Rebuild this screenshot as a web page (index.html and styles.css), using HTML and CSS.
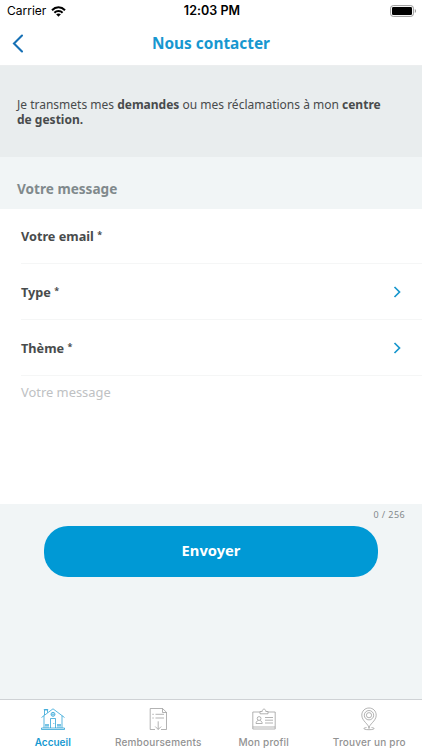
FILE: index.html
```html
<!DOCTYPE html>
<html lang="fr">
<head>
<meta charset="utf-8">
<title>Nous contacter</title>
<link rel="stylesheet" href="styles.css">
</head>
<body>
<div class="status">
  <span class="carrier">Carrier
    <svg width="15" height="11" viewBox="0 0 15 11"><g fill="none" stroke="#000" stroke-width="2"><path d="M1 4.2C4.7.4 10.3.4 14 4.2"/><path d="M3.4 6.7c2.3-2.3 5.9-2.3 8.2 0"/></g><path d="M5.1 8.3c1.4-1.2 3.4-1.2 4.8 0L7.5 10.8z"/></svg>
  </span>
  <span class="time">12:03 PM</span>
  <svg class="battery" width="27" height="12" viewBox="0 0 27 12"><rect x=".6" y=".6" width="22.8" height="10.8" rx="2.6" fill="none" stroke="#999"/><rect x="2" y="2" width="20" height="8" rx="1.3"/><path d="M24.8 4c1.7.6 1.7 3.4 0 4z" fill="#999"/></svg>
</div>
<header class="nav">
  <svg class="back" width="12" height="19" viewBox="0 0 12 19"><path d="M10 1.5 2 9.5l8 8" fill="none" stroke="#1670b5" stroke-width="2.1" stroke-linecap="round"/></svg>
  <h1>Nous contacter</h1>
</header>
<main>
  <p class="intro">Je transmets mes <b>demandes</b> ou mes réclamations à mon <b>centre<br>de gestion.</b></p>
  <h2>Votre message</h2>
  <section class="form">
    <div class="row"><span>Votre email <i>*</i></span></div>
    <div class="row"><span>Type <i>*</i></span><svg width="8" height="12" viewBox="0 0 8 12"><path d="m1.5 1 5 5-5 5" fill="none" stroke="#1797cd" stroke-width="1.7"/></svg></div>
    <div class="row"><span>Thème <i>*</i></span><svg width="8" height="12" viewBox="0 0 8 12"><path d="m1.5 1 5 5-5 5" fill="none" stroke="#1797cd" stroke-width="1.7"/></svg></div>
    <div class="message">Votre message</div>
  </section>
  <div class="count">0 / 256</div>
  <button type="button">Envoyer</button>
</main>
<nav class="tabs">
  <a class="active">
    <svg width="26" height="24" viewBox="0 0 26 24"><path d="M1.5 10.5 13 1.8l11.5 8.7M4 8.7V21m18-12.3V21M4.5 8V3h3v2.7M3.8 2.5h4.4M1.5 22.5h23V21h-23zM10.5 21v-9.5h5V21M13.8 16v1M6 17v4m2-4v4m10-4v4m2-4v4M5 18h4m8 0h4"/><circle cx="13" cy="7.3" r="2"/><path d="M13 5.3v4M11 7.3h4" stroke-width=".5"/></svg>
    <span>Accueil</span>
  </a>
  <a>
    <svg width="26" height="24" viewBox="0 0 26 24"><path d="M10 22.5H5.2V1.5h12.3l4 3.8v17.2H16M17.5 1.5v4h4M7.3 7.3h1.5m1.7 0h8.5M7.3 11h1.5m1.7 0h8.5M13.2 14.3v8m-3-2.8 3 3 3-3"/></svg>
    <span>Remboursements</span>
  </a>
  <a>
    <svg width="26" height="24" viewBox="0 0 26 24"><path d="M9 5H1.8v17h22.4V5H17M1.8 20h22.4M9 6.8h8V4.5h-2.2c0-3.2-3.6-3.2-3.6 0H9zM5 16.5c0-2 1.2-2.7 2.4-3M11.2 16.5c0-2-1.2-2.7-2.4-3M5 16.5h6.2M14 10.5h8M14 13.2h8M14 16h8"/><circle cx="8.1" cy="11.5" r="1.9"/></svg>
    <span>Mon profil</span>
  </a>
  <a>
    <svg width="26" height="24" viewBox="0 0 26 24"><path d="M13 21.5c0-4.5-7.2-7.3-7.2-13.3C5.8 4 9 1 13 1s7.2 3 7.2 7.2c0 6-7.2 8.8-7.2 13.3zM10.5 20.5c-3.8.5-3.8 2.2 2.5 2.2s6.3-1.7 2.5-2.2"/><circle cx="13" cy="8.2" r="4.7"/><circle cx="13" cy="8.2" r="2.6"/></svg>
    <span>Trouver un pro</span>
  </a>
</nav>
</body>
</html>
```
FILE: styles.css
```css
* { box-sizing: border-box; }
body { margin: 0; width: 422px; height: 750px; display: flex; flex-direction: column; overflow: hidden; background: #fff; color: #484b4c; font-family: "Noto Sans", sans-serif; }
svg { display: block; flex: none; }
.status { height: 22px; display: grid; grid-template-columns: 1fr auto 1fr; align-items: center; padding: 0 5px 0 7px; color: #000; font: 12px/22px Inter, sans-serif; }
.carrier { display: flex; gap: 5px; align-items: center; }
.time { font-weight: 600; font-size: 12.5px; letter-spacing: .05px; }
.battery { justify-self: end; }
.nav { height: 44px; display: grid; grid-template-columns: 40px 1fr 40px; align-items: center; border-bottom: 1px solid #eceeef; }
.back { margin-left: 12px; }
h1 { margin: 0; text-align: center; font-size: 15.4px; line-height: 20px; color: #1797d0; font-weight: 700; }
main { flex: 1; background: #f1f5f6; }
.intro { margin: 0; height: 91px; padding: 31px 17px 0; background: #e9edee; font-size: 12px; line-height: 15px; white-space: nowrap; }
.intro b { font-weight: 700; }
h2 { margin: 0; height: 52px; padding: 22px 17px 0; font-size: 13.6px; line-height: 20px; color: #80898c; }
.form { height: 295px; background: #fff; padding-left: 21px; }
.row { height: 56px; border-bottom: 1px solid #f5f6f6; display: flex; align-items: center; justify-content: space-between; padding: 0 21px 0 0; font-size: 12.7px; font-weight: 700; }
.row:first-child { height: 55px; }
.row i { font-size: 9px; font-style: normal; vertical-align: 3px; line-height: 1; }
.message { padding-top: 6px; font-size: 12.9px; line-height: 20px; color: #bec1c3; }
.count { height: 22px; padding: 4px 17px 0; text-align: right; font-size: 9px; line-height: 13px; letter-spacing: .4px; color: #83898c; }
button { display: block; width: 334px; height: 51px; margin: 0 44px; padding: 0 0 3px; border: 0; border-radius: 24px; background: #0099d5; color: #fff; font: 700 14.7px/20px "Noto Sans", sans-serif; }
.tabs { height: 51px; border-top: 1px solid #cfd2d5; display: grid; grid-template-columns: repeat(4, 1fr); background: #fff; }
.tabs a { display: flex; flex-direction: column; align-items: center; padding-top: 7px; color: #929292; font: 500 10px/14px Inter, sans-serif; letter-spacing: .2px; white-space: nowrap; }
.tabs svg { fill: none; stroke: currentColor; stroke-width: .7; }
.tabs span { margin-top: 4px; }
.tabs .active { color: #1699d1; font-weight: 600; letter-spacing: 0; }
```
